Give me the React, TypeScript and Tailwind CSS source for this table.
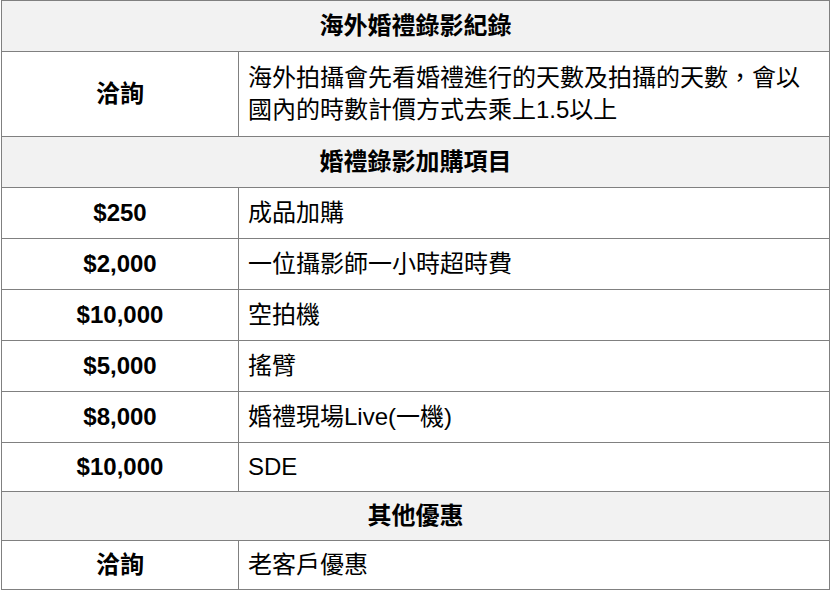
const rows: { price: string; item: string; pad?: string }[] = [
  { price: "$250", item: "成品加購" },
  { price: "$2,000", item: "一位攝影師一小時超時費" },
  { price: "$10,000", item: "空拍機" },
  { price: "$5,000", item: "搖臂" },
  { price: "$8,000", item: "婚禮現場Live(一機)" },
  { price: "$10,000", item: "SDE", pad: "py-[8px]" },
];

function Heading({
  children,
  pad = "py-[9px]",
}: {
  children: React.ReactNode;
  pad?: string;
}) {
  return (
    <tr>
      <th
        colSpan={2}
        className={`border border-[#808080] bg-[#f2f2f2] text-center font-bold ${pad}`}
      >
        {children}
      </th>
    </tr>
  );
}

function Row({
  left,
  right,
  pad = "py-[9px]",
}: {
  left: string;
  right: React.ReactNode;
  pad?: string;
}) {
  return (
    <tr>
      <td
        className={`w-[237px] border border-[#808080] text-center font-bold ${pad}`}
      >
        {left}
      </td>
      <td className={`border border-[#808080] pr-3 pl-[9px] text-left ${pad}`}>
        {right}
      </td>
    </tr>
  );
}

export default function App() {
  return (
    <div className="min-h-[598px] bg-white pl-px font-['Liberation_Sans','Noto_Sans_CJK_TC',sans-serif] text-[24px] leading-[32px] text-black">
      <table className="w-[829px] border-collapse">
        <tbody>
          <Heading>海外婚禮錄影紀錄</Heading>
          <Row
            left="洽詢"
            pad="py-[10px]"
            right={
              <>
                海外拍攝會先看婚禮進行的天數及拍攝的天數，會以
                <br />
                國內的時數計價方式去乘上1.5以上
              </>
            }
          />
          <Heading>婚禮錄影加購項目</Heading>
          {rows.map((r, i) => (
            <Row key={i} left={r.price} right={r.item} pad={r.pad} />
          ))}
          <Heading pad="py-[8px]">其他優惠</Heading>
          <Row left="洽詢" right="老客戶優惠" pad="py-[8px]" />
        </tbody>
      </table>
    </div>
  );
}
